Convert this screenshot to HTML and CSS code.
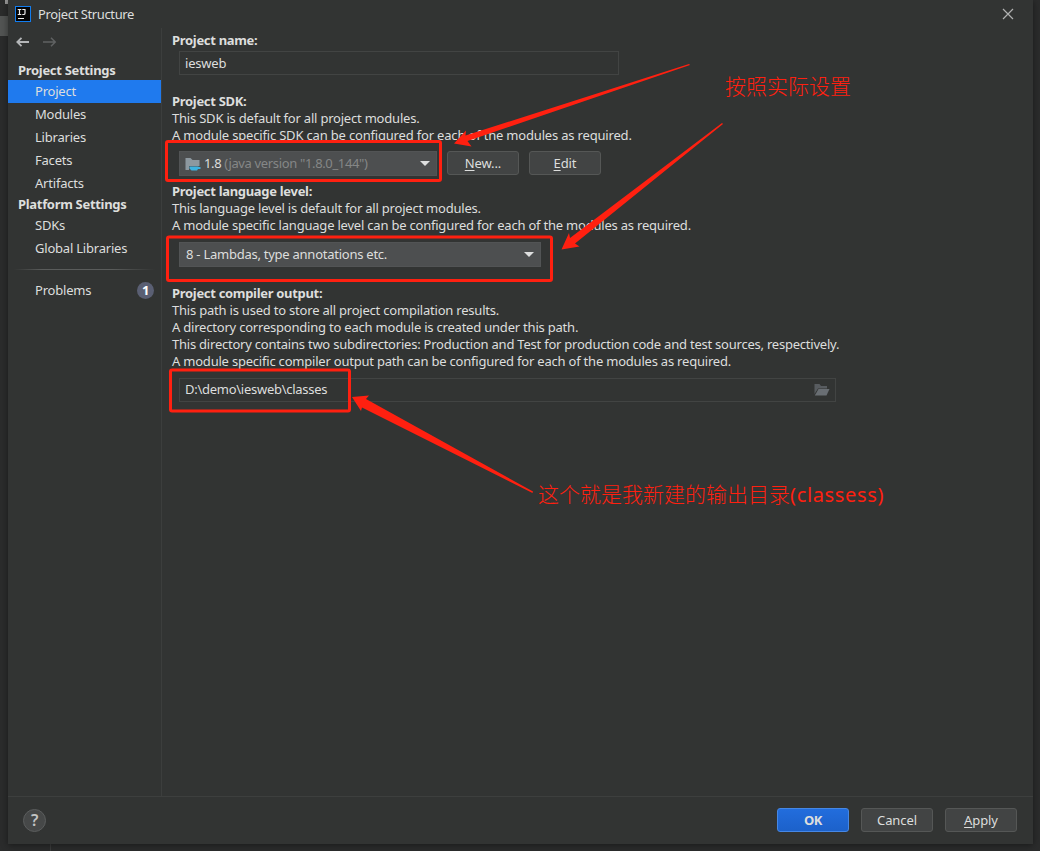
FILE: index.html
```html
<!DOCTYPE html>
<html lang="en">
<head>
<meta charset="utf-8">
<title>Project Structure</title>
<link rel="stylesheet" href="styles.css">
</head>
<body>
<div class="backdrop-mark"></div>
<div class="backdrop-tab"></div>
<div class="backdrop-line"></div>
<div class="dialog">
  <header class="titlebar">
    <svg class="logo" width="16" height="16" viewBox="0 0 16 16"><rect x="0.5" y="0.5" width="15" height="15" fill="#050505" stroke="#127df0"/><path d="M2.700 3.500h3.600M4.500 3.500v5M2.700 8.500h3.600M7.300 3.500h3.200M10 3.500v3.700q0 1.300-1.300 1.300H7.300M3 12.500h6" fill="none" stroke="#eee" stroke-width="1.2"/></svg>
    <span class="title">Project Structure</span>
    <svg class="close" width="12" height="12" viewBox="0 0 12 12"><path d="M1 1l10 10M11 1L1 11" stroke="#b0b1b1" stroke-width="1.2"/></svg>
  </header>
  <div class="body">
    <nav class="sidebar">
      <div class="history">
        <svg width="14" height="12" viewBox="0 0 14 12"><path d="M13 6H1.500M5.500 1.800L1.300 6L5.500 10.200" fill="none" stroke="#b4b6b8" stroke-width="1.8"/></svg>
        <svg width="14" height="12" viewBox="0 0 14 12"><path d="M0 6h12M8 1.800L12.200 6L8 10.200" fill="none" stroke="#606263" stroke-width="1.5"/></svg>
      </div>
      <div class="group">Project Settings</div>
      <div class="item selected">Project</div>
      <div class="item">Modules</div>
      <div class="item">Libraries</div>
      <div class="item">Facets</div>
      <div class="item">Artifacts</div>
      <div class="group">Platform Settings</div>
      <div class="item">SDKs</div>
      <div class="item">Global Libraries</div>
      <div class="separator"></div>
      <div class="item problems"><span>Problems</span><span class="count">1</span></div>
    </nav>
    <main class="content">
      <section class="name">
        <h2>Project name:</h2>
        <div class="field name-field">iesweb</div>
      </section>
      <section class="sdk">
        <h2>Project SDK:</h2>
        <p>This SDK is default for all project modules.</p>
        <p class="sdk-note">A module specific SDK can be configured for each of the modules as required.</p>
        <div class="row">
          <div class="combo sdk-combo">
            <svg class="folder" width="16" height="16" viewBox="0 0 16 16"><path d="M0.500 2h5l2 2h7v6H4v4H0.500z" fill="#8d989f"/><path d="M4.500 10.500h9v0.500H15.500v2h-2.500l-1 1.500H6.500L4.500 12.500zM4.500 15h8.500" fill="#3eb2df"/></svg>
            <span>1.8 <span class="dim">(java version "1.8.0_144")</span></span>
            <i class="caret"></i>
          </div>
          <button class="btn"><span><u>N</u>ew...</span></button>
          <button class="btn"><span><u>E</u>dit</span></button>
        </div>
      </section>
      <section class="level">
        <h2>Project language level:</h2>
        <p>This language level is default for all project modules.</p>
        <p>A module specific language level can be configured for each of the modules as required.</p>
        <div class="combo level-combo"><span>8 - Lambdas, type annotations etc.</span><i class="caret"></i></div>
      </section>
      <section class="output">
        <h2>Project compiler output:</h2>
        <p>This path is used to store all project compilation results.</p>
        <p>A directory corresponding to each module is created under this path.</p>
        <p class="subdirs">This directory contains two subdirectories: Production and Test for production code and test sources, respectively.</p>
        <p>A module specific compiler output path can be configured for each of the modules as required.</p>
        <div class="field path-field"><span>D:\demo\iesweb\classes</span>
          <svg width="16" height="12" viewBox="0 0 16 12"><path d="M0.500 0h5l1.500 2h6v2.500H4L0.500 10z" fill="#585c60"/><path d="M4.500 5H15.500L12.500 11.500H0.800z" fill="#696e73"/></svg>
        </div>
      </section>
    </main>
  </div>
  <footer class="footer">
    <div class="help">?</div>
    <div class="actions">
      <button class="btn primary">OK</button>
      <button class="btn">Cancel</button>
      <button class="btn"><span><u>A</u>pply</span></button>
    </div>
  </footer>
</div>
<svg class="annotations" width="1040" height="851" viewBox="0 0 1040 851">
  <g fill="none" stroke="#ff2010" stroke-width="3">
    <rect x="166.500" y="141.500" width="274" height="39" rx="1.500"/>
    <rect x="167.500" y="237" width="384" height="43.500" rx="1.500"/>
    <rect x="170.500" y="370" width="179" height="41" rx="1.500"/>
  </g>
  <g fill="#ff2010">
    <path d="M454 143.500L466 130.500L465.500 135.500L689 64L690 65L467.500 141L471.500 146.500z"/>
    <path d="M561.500 249.500L569 233L570 238L722 123L723 124L575 243.500L579.500 246.500z"/>
    <path d="M352 397L369 395.500L366 399L533 491.500L532.500 493L362 407.500L361 411z"/>
  </g>
</svg>
<div class="note note-settings">按照实际设置</div>
<div class="note note-output">这个就是我新建的输出目录<span>(classess)</span></div>
</body>
</html>
```
FILE: styles.css
```css
* { box-sizing: border-box; }
body {
  margin: 0; width: 1040px; height: 851px; overflow: hidden; position: relative;
  background: #2b2c2c; color: #dddedd;
  font: 13px/17px "Noto Sans", "Open Sans", sans-serif;
  letter-spacing: -.21px;
}
.dialog {
  width: 1025px; height: 844px; margin-left: 8px; background: #323433;
  box-shadow: 0 1px 7px rgba(0,0,0,.45);
  display: flex; flex-direction: column; position: relative;
}
.backdrop-tab { position: absolute; left: 0; top: 16px; width: 8px; height: 20px; background: #535554; }
.backdrop-mark { position: absolute; left: 5px; top: 0; width: 3px; height: 4px; background: #999; }
.backdrop-line { position: absolute; left: 50px; top: 844px; width: 1px; height: 7px; background: #3b3c3c; }
.titlebar { height: 28px; display: flex; align-items: center; padding: 0 19px 0 7px; }
.title { margin-left: 7px; padding-top: 1px; letter-spacing: -.38px; }
.close { margin-left: auto; }
.body { flex: 1; display: flex; min-height: 0; }
.sidebar { width: 154px; border-right: 1px solid #3c3e3d; }
.history { height: 33px; display: flex; gap: 13px; padding: 8px 0 0 8px; }
.group { height: 19px; line-height: 19px; padding-left: 10px; font-weight: 700; letter-spacing: -.31px; }
.item { height: 23px; line-height: 23px; padding-left: 27px; }
.selected { background: #1f7aee; }
.separator { height: 1px; margin: 9px 6px 9px; background: linear-gradient(90deg, transparent, #5a5c5b 20%, #5a5c5b 70%, transparent); }
.problems { display: flex; align-items: center; justify-content: space-between; padding-right: 7px; }
.count { width: 17px; height: 17px; border-radius: 50%; background: #5a5f73; line-height: 17px; text-align: center; font-weight: 700; color: #fff; }
.content { padding: 4px 0 0 10px; }
h2, p { margin: 0; font-size: 13px; line-height: 17px; height: 17px; white-space: nowrap; }
h2 { letter-spacing: -.31px; }
.sdk-note { letter-spacing: -.18px; }
.subdirs { letter-spacing: -.225px; }
.name { height: 61px; }
.sdk { height: 90px; }
.level { height: 102px; }
.field { margin-left: 7px; border: 1px solid #424443; height: 24px; line-height: 22px; padding: 0 5px; }
.name-field { width: 440px; margin-top: 2px; }
.path-field { width: 657px; margin-top: 8px; display: flex; justify-content: space-between; align-items: center; }
.path-field span { padding-bottom: 2px; letter-spacing: -.27px; }
.row { display: flex; margin: 7px 0 0 7px; align-items: flex-start; }
.combo { height: 25px; background: #4d4f50; border: 1px solid #525455; display: flex; align-items: center; padding: 0 6px; white-space: nowrap; letter-spacing: -.25px; }
.sdk-combo { width: 258px; margin-right: 10px; padding-left: 5px; letter-spacing: -.35px; }
.level-combo { width: 362px; margin: 8px 0 0 7px; }
.folder { margin-right: 3px; }
.dim { color: #858787; }
.caret { margin-left: auto; border: 5px solid transparent; border-top-color: #dedfdf; border-bottom: 0; }
.btn { width: 72px; height: 24px; padding: 1px 0 0; border: 1px solid #555756; border-radius: 3px; background: #424444; color: inherit; font: inherit; letter-spacing: -.1px; margin-right: 10px; }
.btn u { text-underline-offset: 2px; }
.primary { background: linear-gradient(#226ddd, #1c61ca); border-color: #4687e4; font-weight: 700; letter-spacing: -.5px; }
.footer { height: 48px; border-top: 1px solid #3d3f3e; display: flex; align-items: flex-start; justify-content: space-between; padding: 11px 16px 0 15px; }
.help { width: 23px; height: 23px; margin-top: 1px; border: 1px solid #5b5d5d; border-radius: 50%; background: #464848; font-size: 16px; font-weight: 600; line-height: 21px; text-align: center; color: #c3c4c4; }
.actions { display: flex; gap: 12px; }
.actions .btn { margin: 0; }
.annotations { position: absolute; left: 0; top: 0; }
.note { position: absolute; color: #ff2010; font: 300 21px/28px "Noto Sans", "Noto Sans CJK SC", sans-serif; letter-spacing: 0; white-space: nowrap; }
.note-settings { left: 725px; top: 72px; }
.note-output { left: 538px; top: 480px; }
.note span { font-size: 20px; font-weight: 400; letter-spacing: .65px; }
```
